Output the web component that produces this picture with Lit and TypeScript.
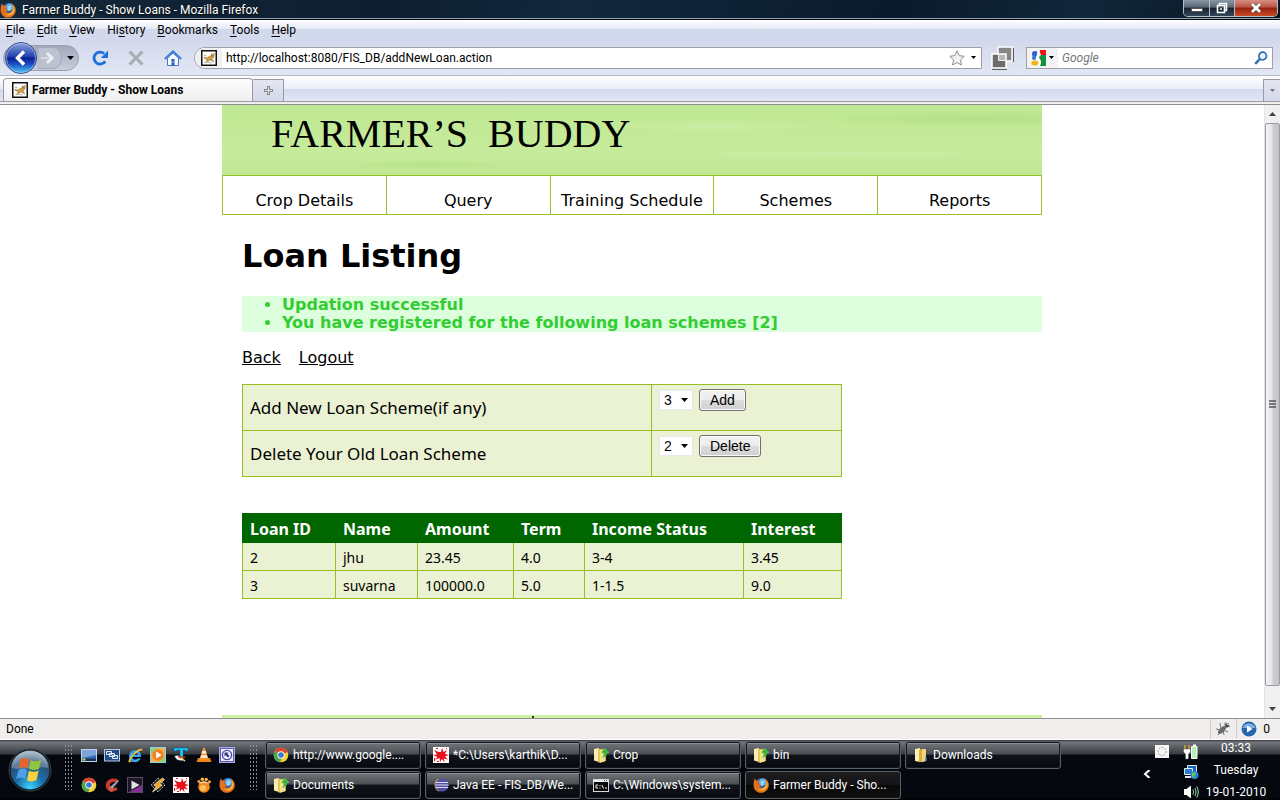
import { LitElement, html, svg, css, TemplateResult } from "lit";
import { customElement, property, state } from "lit/decorators.js";
import { classMap } from "lit/directives/class-map.js";

/* ---------- icons ---------- */

const firefox = svg`
  <circle cx="8.5" cy="7.5" r="6.4" fill="#1d5fb5"/>
  <circle cx="9.5" cy="5.2" r="3.6" fill="#58b4ee"/>
  <path d="M8 4.5c1.4-1 3-.8 4 .2l-1.6.9c.6 1 .4 2-.4 2.6L7.6 9z" fill="#cfe9f9" opacity=".7"/>
  <path d="M2 1.2c.2 1 .8 1.9 1.7 2.5 1.4-.6 2.6-.3 3.6.5L5.9 5.6c-.9.2-.8 1-.3 1.5.7.6 1.9.2 2.8.8-.3 1-1.4 1.2-2.3 1.5.9 1.5 3 1.8 4.6.8 2.300-1.400 2.800-4 2-6.100-.5-1.400-1.400-2.400-2.400-3.100 3.300.9 5.600 3.900 5.500 7.300-.1 4.200-3.500 7.500-7.700 7.500C3.700 15.800.4 12.300.5 8 .6 5.400 1 3.200 2 1.200z" fill="#e2701c"/>
  <path d="M13.300 3.200c1.700 2.500 1.500 6-.4 8.200-2.200 2.500-6 2.700-8.300.7 3 .9 5.900 0 7.500-2.300 1.300-1.900 1.700-4.300 1.200-6.600z" fill="#fbc33a"/>`;

const cat = svg`
  <rect x=".75" y=".75" width="14.500" height="14.500" fill="#fff" stroke="#111" stroke-width="1.500"/>
  <path d="M13.300 3l-.2 4-2 2 1.800 3-1-.2-2-1.600-2 .3-3 1.500 1.300-2.200L3 8.200 3.200 7l2.600 1 2.400-1.800 2-.2.3-2.500 1.300 1z" fill="#d09a48" stroke="#8a6224" stroke-width=".4"/>
  <path d="M3 5l2.500 1M3.500 12.800l4-.8 3 1.300" stroke="#9b9b8a" stroke-width=".9" fill="none"/>
  <circle cx="11" cy="5.700" r=".5" fill="#222"/>`;

const chrome = svg`
  <circle cx="8" cy="8" r="7.300" fill="#f5cf38"/>
  <path d="M8 8L1.700 4.300A7.300 7.300 0 0 1 14.600 5z" fill="#dd4132"/>
  <path d="M1.700 4.300A7.300 7.300 0 0 0 7 15.200L10 9z" fill="#4aa64e"/>
  <circle cx="8" cy="8" r="3.700" fill="#fff"/><circle cx="8" cy="8" r="2.800" fill="#3d78c9"/>`;

const folderUp = svg`
  <path d="M1 2l5-1v14l-5-1.500z" fill="#fbeeb0"/>
  <path d="M5 2h7.500v12L8 15.500H5z" fill="#e8c45a"/>
  <path d="M7 3.500l5.500-1v11.500L8 15.500H7z" fill="#f8e08d"/>
  <path d="M11.500 1L16 5.500h-2.200c0 3-1.600 4.800-4.800 5.500 1.400-1.300 1.800-3 1.700-5H8z" fill="#38b52f" stroke="#7be26d" stroke-width=".5"/>`;

const folder = svg`
  <path d="M2 2l5-1v14l-5-1z" fill="#fbf0b8"/>
  <path d="M6 3l3-1v13l-3 .3z" fill="#d9ad40"/>
  <path d="M9 2h4v12l-4 1.300z" fill="#f1d474"/>
  <path d="M12 10h1.500v4H12z" fill="#5aa0dc"/>`;

const splat = svg`
  <rect width="16" height="16" fill="#fff"/>
  <path d="M8 5l1-4 1.500 4L14 3l-2 4 4 1-4 1.500 3 3-4-1 .5 4L9 12l-2 3-.5-4L2 13l2.500-3L0 8l4-.5L1 3l4.500 2z" fill="#e8101c"/>
  <path d="M3 1h2v1H3zM1 11h1v3H1zM13 1h1v1h-1zM4 14h2v1H4z" fill="#e8101c"/>`;

const eclipse = svg`
  <path d="M6 1.500A7 7 0 0 0 6 14.500z" fill="#e7a35a"/>
  <circle cx="9" cy="8" r="6.600" fill="#5450a6"/>
  <path d="M3 5.500h12M2.500 8h13M3 10.500h12" stroke="#dcdcf5" stroke-width="1"/>`;

const terminal = svg`
  <rect x=".5" y="2.500" width="15" height="12" fill="#080808" stroke="#d8d8d8"/>
  <path d="M1 3h14v2H1z" fill="#e8eef5"/><path d="M11 3.500h1M13 3.500h1" stroke="#446"/>
  <path d="M5 8H3v3h2M7 8v1M7 10.500v1M9 8l1.500 3.500M12 11h2" stroke="#fff" fill="none"/>`;

const desktop = svg`
  <rect x=".5" y="2.500" width="15" height="12" fill="#3b6cb7" stroke="#c3d2e8"/>
  <path d="M1 3h14v5L1 11z" fill="#7ea6dc"/><path d="M1 11.500h14V14H1z" fill="#1d2f52"/>
  <circle cx="3" cy="12.500" r="1.800" fill="#53b06b"/><path d="M2 12.500h2" stroke="#f3bd3a"/>`;

const switcher = svg`
  <rect x=".5" y="2.500" width="15" height="11.500" fill="#234b86" stroke="#b9c9df"/>
  <path d="M2.500 4.500h5v3h-5zM5.500 6.500h5v3h-5zM8.500 8.500h5v3h-5z" fill="#32649f" stroke="#e6eef8"/>`;

const ie = svg`
  <path d="M14 9.900H5.200c.2 1.700 1.400 2.600 3 2.600 1.100 0 1.900-.4 2.400-1.200h3c-.8 2.400-2.800 3.900-5.500 3.900-3.600 0-6-2.400-6-5.900S4.600 3.200 8.200 3.200c3.700 0 6 2.600 5.800 6.700zM10.900 7.700c-.2-1.500-1.200-2.300-2.700-2.300s-2.600.8-3 2.300z" fill="#39a5ea"/>
  <path d="M15.500 3.500c.3-2.500-3-2.500-6 .2C4.500 7.500 1 13 1.500 14.800c.3 1 2.300.6 4-.6-1.300.3-2.300.3-2-1 .5-2 3-5 6-7.200 3-2.300 5.200-3.200 6-2.500z" fill="#f3c23c"/>`;

const wmp = svg`
  <rect x=".5" y=".5" width="15" height="15" fill="#f7b04b" stroke="#7fd8ef"/>
  <path d="M1 1h6L1 7zM15 15H9l6-6z" fill="#8fd16b"/>
  <circle cx="8" cy="8" r="5.700" fill="#f08322"/><path d="M6.200 4.500L11.700 8l-5.500 3.500z" fill="#fff"/>`;

const textpad = svg`
  <path d="M1 1h14v3h-2L12 3h-2v10l2 1H6l1-1V3H4L3 4H1z" fill="#18d4f4" stroke="#0646a8" stroke-width=".5"/>
  <path d="M1 9l4-1 5 3-1 3-5-1z" fill="#fff" stroke="#111" stroke-width=".7"/>
  <path d="M5 9l3 2 4-1" stroke="#e22a1a" stroke-width="1.500" fill="none"/><path d="M8 11l4 3" stroke="#ffe14a" stroke-width="1.500"/>`;

const vlc = svg`
  <path d="M2 11h12l1.500 4H.5z" fill="#f08218"/><path d="M7 1h2l3.200 11c-2 1.300-6.400 1.300-8.400 0z" fill="#f59427"/>
  <path d="M6.200 4h3.600l.7 2.500h-5zM5 8.300h6l.7 2.400H4.300z" fill="#f5efe8"/>`;

const backup = svg`
  <rect x=".5" y=".5" width="15" height="15" fill="#5a5cb8" stroke="#a9aae6"/>
  <rect x="2" y="2" width="12" height="12" fill="#eeeefb"/>
  <path d="M5.500 5.500h4L8.300 6.700l2.200 2.200-1.600 1.600-2.200-2.200-1.200 1.200z" fill="#35378e"/>
  <circle cx="8" cy="8" r="4.600" stroke="#4a4ca4" stroke-width="1.400" fill="none"/>`;

const ccleaner = svg`
  <path d="M14 2.500C9 0 1.800 2.500 1.800 8.500S9 15.800 13.500 13l-1-3c-3 1.700-6.500.8-6.500-2S9.500 4.300 13 5.500z" fill="#c93a2a"/>
  <path d="M7 9l7-6 1 1-5.500 6.500L8 14l-3-2z" fill="#98a0ab"/><path d="M5 10l5 2-2 3-3-1z" fill="#d9574a"/>`;

const player = svg`
  <rect x=".5" y=".5" width="15" height="15" fill="#1d1724" stroke="#5b4a66"/>
  <path d="M2 15L15 8v7z" fill="#a63bb8" opacity=".75"/><path d="M4.500 3.500L12.500 8l-8 4.500z" fill="#e2e2e6"/>`;

const winamp = svg`
  <path d="M8 1l7 7-7 7-7-7z" fill="#2b2b2b" stroke="#e8e8e8" stroke-width=".8" stroke-dasharray="1.500 1"/>
  <path d="M12.500 1L4 8l2.500 1.200L2.500 15 12 8.200 9.500 7l5-4.500z" fill="#f6a21e" stroke="#fff0c0" stroke-width=".7"/>`;

const gom = svg`
  <circle cx="8" cy="10" r="5.800" fill="#f58a1c"/><circle cx="7" cy="11" r="3" fill="#fdc067"/>
  <circle cx="3" cy="4.500" r="1.600" fill="#ffa42e"/><circle cx="6.300" cy="2.200" r="1.700" fill="#ffb44a"/>
  <circle cx="10.200" cy="2.400" r="1.700" fill="#ffb44a"/><circle cx="13.400" cy="4.800" r="1.600" fill="#ffa42e"/>
  <path d="M3.500 6.500c3-2 6-2 9 0" stroke="#fff" stroke-width="1" fill="none"/>`;

const icon = (body: TemplateResult | unknown, size = 16, box = 16) =>
  html`<svg width=${size} height=${size} viewBox="0 0 ${box} ${box}" aria-hidden="true">${body}</svg>`;

const caret = html`<svg width="7" height="4" viewBox="0 0 7 4" aria-hidden="true"><path d="M0 0h7L3.500 4z" fill="currentColor"/></svg>`;
const smallCaret = html`<svg width="5" height="3" viewBox="0 0 5 3" aria-hidden="true"><path d="M0 0h5L2.500 3z" fill="currentColor"/></svg>`;

/* ---------- shared rules ---------- */

const base = css`
  *, *::before, *::after { box-sizing: border-box; }
  :host { font-family: Roboto, "Open Sans", sans-serif; font-size: 12px; line-height: 16px; color: #000; }
  button { font: inherit; color: inherit; background: none; border: 0; padding: 0; margin: 0; }
  svg { display: block; flex: none; }
`;

/* ---------- browser chrome ---------- */

@customElement("browser-chrome")
class BrowserChrome extends LitElement {
  @property() pageTitle = "";
  @property() url = "";

  static styles = [base, css`
    :host { display: block; }
    .title { display: flex; align-items: center; height: 20px; gap: 6px; color: #fff;
      background: linear-gradient(100deg, #14293a, #0d1e30 30%, #12283c 45%, #0a1a2c 70%, #11273a 85%, #081522);
      border-bottom: 1px solid #050a10; box-shadow: inset 0 -1px #8fa0af; }
    .title h1 { flex: 1; margin: 0; font-size: inherit; font-weight: 400; text-shadow: 0 1px 2px #000; }
    .win { display: flex; align-self: flex-start; margin-right: 2px; border: 1px solid #b5bfc8; border-top: 0; border-radius: 0 0 5px 5px; overflow: hidden; }
    .win button { width: 25px; height: 16px; display: grid; place-items: center; background: linear-gradient(#8a97a4, #5a6876 45%, #16222f 50%, #33475b); border-right: 1px solid #b5bfc8; }
    .win .min { place-items: end center; padding-bottom: 4px; width: 26px; }
    .win .close { width: 42px; border: 0; background: linear-gradient(#d49083, #bd5142 45%, #96200f 50%, #cc4a26); }
    .menu { display: flex; height: 20px; padding-left: 6px; gap: 12px; align-items: center;
      background: linear-gradient(#fff, #e4e9f4 45%, #d3d9ec 46%, #d3d9ec); }
    .menu u { text-underline-offset: 2px; }
    .nav { display: flex; align-items: center; height: 36px; padding: 0 7px 0 3px; background: linear-gradient(#d3d9ec, #e2e7f5); border-bottom: 1px solid #b6bac8; }
    .history { display: flex; align-items: center; height: 26px; width: 76px; border-radius: 13px; background: linear-gradient(#a3a9ba, #c9cedd); border: 1px solid #9aa0b2; }
    .caret { width: 16px; display: grid; place-items: center; height: 20px; }
    .tools { display: flex; gap: 20px; margin: 0 12px 0 13px; align-items: center; }
    .address { flex: 1; display: flex; align-items: center; height: 22px; background: #fff; border: 1px solid #a0a0a4; border-radius: 11px 0 0 11px; min-width: 0; }
    .site { width: 27px; height: 20px; display: grid; place-items: center; background: #f0f0f2; border-radius: 10px 0 0 10px; }
    input { flex: 1; min-width: 0; border: 0; outline: 0; background: none; font: inherit; padding: 0 4px; height: 18px; color: #000; }
    .plug { margin: 0 12px 0 8px; }
    .search { display: flex; align-items: center; width: 247px; height: 22px; background: #fff; border: 1px solid #a0a0a4; padding-right: 4px; }
    .engine { display: flex; align-items: center; gap: 3px; width: 31px; height: 20px; padding-left: 3px; background: #f3f3f5; }
    .search input { font-style: italic; }
    .search input::placeholder { color: #777; opacity: 1; }
    .tabs { display: flex; align-items: flex-end; height: 26px; padding-left: 3px; border-bottom: 1px solid #9a9a9e;
      background: linear-gradient(#fff, #eceff8 50%, #d4daee 52%, #e2e7f6); }
    .tab { display: flex; align-items: center; gap: 4px; height: 23px; width: 250px; padding: 0 8px; border: 1px solid #9a9a9e; border-bottom: 0; border-radius: 4px 4px 0 0;
      background: linear-gradient(#fdfdfd, #efefef); font-weight: 700; text-align: left; }
    .new, .list { display: grid; place-items: center; width: 31px; height: 22px; border: 1px solid #9a9aa4; border-bottom: 0; border-left: 0; background: linear-gradient(#e4e7f1, #d3d8e8); }
    .list { width: 17px; margin-left: auto; border-left: 1px solid #9a9aa4; border-right: 0; color: #777; }
    .rim { height: 3px; background: #f0f0f0; border-bottom: 1px solid #8f8f93; }
  `];

  render() {
    const menus = [["", "F", "ile"], ["", "E", "dit"], ["", "V", "iew"], ["Hi", "s", "tory"], ["", "B", "ookmarks"], ["", "T", "ools"], ["", "H", "elp"]];
    return html`
      <header class="title">
        ${icon(firefox)}
        <h1>${this.pageTitle} - Mozilla Firefox</h1>
        <div class="win">
          <button class="min" aria-label="Minimize"><svg width="12" height="4" viewBox="0 0 12 4"><rect x=".5" y=".5" width="11" height="3" fill="#fff" stroke="#555"/></svg></button>
          <button aria-label="Restore"><svg width="12" height="12" viewBox="0 0 12 12"><path d="M3.500 3V1.500h7v7H9M1.500 3.500h7v7h-7z" fill="none" stroke="#fff" stroke-width="1.600"/><path d="M4.500 6.500h1v1h-1z" stroke="#fff" fill="#222"/></svg></button>
          <button class="close" aria-label="Close"><svg width="12" height="10" viewBox="0 0 12 10"><path d="M2 1l8 8M10 1L2 9" stroke="#554" stroke-width="4"/><path d="M2 1l8 8M10 1L2 9" stroke="#fff" stroke-width="2.500"/></svg></button>
        </div>
      </header>
      <nav class="menu" aria-label="Menu bar">${menus.map(([a, b, c]) => html`<button>${a}<u>${b}</u>${c}</button>`)}</nav>
      <div class="nav">
        <div class="history">
          <button aria-label="Back"><svg width="34" height="34" viewBox="0 0 34 34">
            <defs><linearGradient id="bk" x2="0" y2="1"><stop offset="0" stop-color="#8ea4e0"/><stop offset=".45" stop-color="#2343ae"/><stop offset=".5" stop-color="#0c1f94"/><stop offset=".7" stop-color="#1a4fc4"/><stop offset="1" stop-color="#4fd0fa"/></linearGradient></defs>
            <circle cx="17" cy="17" r="15.500" fill="url(#bk)" stroke="#3a4c8c"/><circle cx="17" cy="17" r="14.500" fill="none" stroke="#b9cdf2" stroke-opacity=".6"/>
            <path d="M20 10.500L13.500 17l6.500 6.500" fill="none" stroke="#fff" stroke-width="3.400"/></svg></button>
          <button aria-label="Forward"><svg width="24" height="22" viewBox="0 0 24 22"><path d="M0 .5h15a8 10 0 0 1 0 21H0z" fill="#bcc2d0" stroke="#a4aaba"/><path d="M9 6l5 5-5 5" fill="none" stroke="#eceef4" stroke-width="3"/><path d="M3 11h9" stroke="#d5d9e4" stroke-width="2"/></svg></button>
          <button class="caret" aria-label="Recent pages">${caret}</button>
        </div>
        <div class="tools">
          <button aria-label="Reload">${icon(svg`<path d="M13.200 11.200A6 6 0 1 1 12 3.600" fill="none" stroke="#1b6fdf" stroke-width="2.800"/><path d="M16 .5V8H8.800z" fill="#1b6fdf"/>`)}</button>
          <button aria-label="Stop">${icon(svg`<path d="M1.500 1.500l13 13M14.500 1.500l-13 13" stroke="#a9abb3" stroke-width="3"/>`)}</button>
          <button aria-label="Home"><svg width="18" height="16" viewBox="0 0 18 16"><path d="M3.500 8v7.500h11V8L9 3z" fill="#f4f8ff" stroke="#4779c8"/><path d="M.8 9L9 1.300 17.200 9" fill="none" stroke="#3d7fd8" stroke-width="2"/><path d="M7.500 9h3v6.500h-3z" fill="#2a5cb0"/><path d="M8.500 11h1v2h-1z" fill="#bcd"/></svg></button>
        </div>
        <div class="address">
          <span class="site">${icon(cat)}</span>
          <input aria-label="Location" .value=${this.url} />
          <button aria-label="Bookmark this page">${icon(svg`<path d="M8 .9l2.200 4.700 5 .7-3.700 3.500.9 5.200L8 12.500 3.600 15l.9-5.200L.8 6.300l5-.7z" fill="#f2f2f2" stroke="#8d8d8d"/>`)}</button>
          <button class="caret" aria-label="Show history">${smallCaret}</button>
        </div>
        <button class="plug" aria-label="Windows"><svg width="24" height="24" viewBox="0 0 24 24"><path d="M2 23.200h15M23.200 2v14" stroke="#222"/><path d="M8 1h14v14H8z" fill="#858585" stroke="#fff" stroke-width="1.500"/><path d="M2 8h14v14H2z" fill="#6c6c6c" stroke="#fff" stroke-width="1.500"/><path d="M8.500 8.500h7v6h-7z" fill="#b7b7b7" stroke="#eee"/></svg></button>
        <div class="search">
          <button class="engine" aria-label="Search engine">${icon(svg`<path d="M9 0h7v5h-5z" fill="#f01414"/><path d="M11 5h5v11h-6l1-5-2-4z" fill="#14913c"/><circle cx="5" cy="4" r="3" fill="#2a62d0"/><circle cx="4" cy="8" r="2" fill="#3a72d8"/><ellipse cx="5" cy="13" rx="3.700" ry="2.500" fill="#f5b416"/><path d="M9 0L7 8l3 4-1 4" stroke="#fff" stroke-width="2" fill="none"/>`)}${smallCaret}</button>
          <input aria-label="Search" placeholder="Google" />
          <button aria-label="Go"><svg width="14" height="14" viewBox="0 0 14 14"><circle cx="8.700" cy="5" r="3.800" fill="#eaf3fc" stroke="#2f6cb0" stroke-width="1.700"/><path d="M6 7.800L1.200 12.800" stroke="#2f6cb0" stroke-width="2.400"/></svg></button>
        </div>
      </div>
      <div class="tabs">
        <button class="tab">${icon(cat)}<span>${this.pageTitle}</span></button>
        <button class="new" aria-label="New tab"><svg width="9" height="9" viewBox="0 0 9 9"><path d="M4.500 0v9M0 4.500h9" stroke="#8a8a90" stroke-width="3"/><path d="M4.500 1v7M1 4.500h7" stroke="#ddd"/></svg></button>
        <button class="list" aria-label="List all tabs">${smallCaret}</button>
      </div>
      <div class="rim"></div>`;
  }
}

/* ---------- page ---------- */

interface Loan { id: string; name: string; amount: string; term: string; status: string; interest: string; }

@customElement("loan-page")
class LoanPage extends LitElement {
  @state() private loans: Loan[] = [
    { id: "2", name: "jhu", amount: "23.45", term: "4.0", status: "3-4", interest: "3.45" },
    { id: "3", name: "suvarna", amount: "100000.0", term: "5.0", status: "1-1.5", interest: "9.0" },
  ];

  static styles = [base, css`
    :host { display: flex; flex-direction: column; align-items: center; overflow: hidden; background: #fff; font-family: "DejaVu Sans", Verdana, sans-serif; font-size: 16px; line-height: 18px; }
    .wrap { width: 820px; max-width: 100%; flex: 1; display: flex; flex-direction: column; min-height: 0; }
    .banner { height: 70px; padding: 6px 49px; font-family: "Liberation Serif", serif; font-size: 40px; line-height: 46px; color: #000; white-space: pre;
      background: radial-gradient(ellipse 90px 5px at 25% 85%, #b3e083aa, #0000), radial-gradient(ellipse 160px 8px at 92% 20%, #b0dd80bb, #0000), radial-gradient(ellipse 120px 6px at 60% 30%, #d0efabaa, #0000), radial-gradient(ellipse 180px 5px at 75% 70%, #cfeeaaaa, #0000),
        linear-gradient(#bfe792, #c4ea98 40%, #c6eb9c 70%, #c0e793); }
    .nav { display: grid; grid-template-columns: repeat(5, 1fr); border: 1px solid #9abf28; border-right: 0; }
    .nav a { height: 38px; padding-top: 16px; text-align: center; color: #000; text-decoration: none; white-space: nowrap; border-right: 1px solid #9abf28; }
    main { padding-left: 20px; flex: 1; }
    h2 { margin: 22px 0 20px; font-size: 32px; line-height: 39px; }
    .msgs { margin: 0; padding-left: 40px; background: #dfd; color: #32cd32; font-weight: 700; }
    .links { display: flex; gap: 18px; margin: 17px 0; }
    .links a { color: #000; }
    table { width: 600px; max-width: 100%; border-collapse: collapse; background: #eaf2d3; font-family: "Noto Sans", "Open Sans", sans-serif; }
    td, th { border: 1px solid #98bf21; text-align: left; padding: 0 7px; }
    .schemes { margin-bottom: 36px; font-size: 17px; }
    .schemes th { font-weight: 400; height: 46px; width: 409px; }
    .schemes td { vertical-align: top; padding-top: 4px; }
    .pick { display: flex; gap: 6px; align-items: center; font: 14px/16px "Liberation Sans", Arial, sans-serif; }
    .drop { display: grid; align-items: center; }
    .drop > * { grid-area: 1 / 1; }
    .drop svg { justify-self: end; margin-right: 5px; pointer-events: none; }
    select { appearance: none; font: inherit; width: 34px; height: 20px; padding: 0 4px; border: 1px solid #e3e9ef; border-radius: 0; background: #fff; color: #000; }
    .pick button { height: 22px; padding: 0 10px; border: 1px solid #707070; border-radius: 3px; box-shadow: inset 0 0 0 1px #fbfbfb; background: linear-gradient(#f2f2f2, #ebebeb 50%, #dddddd 50%, #cfcfcf); }
    .loans { font-size: 14px; table-layout: fixed; }
    .loans th { height: 29px; padding-top: 2px; background: #060; color: #fff; border: 1px solid #060; font-size: 16px; }
    .loans td { height: 28px; padding-top: 2px; }
    .foot { height: 3px; background: #cbf3a2; display: flex; padding-left: 310px; align-items: center; }
    .foot::before { content: ""; width: 2px; height: 2px; background: #333; }
  `];

  private picker(id: string, value: string, action: string) {
    return html`<div class="pick">
      <span class="drop"><select id=${id}><option>${value}</option></select>
        <svg width="7" height="4" viewBox="0 0 7 4" aria-hidden="true"><path d="M0 0h7L3.500 4z"/></svg></span>
      <button>${action}</button></div>`;
  }

  render() {
    return html`<div class="wrap">
      <div class="banner">FARMER’S  BUDDY</div>
      <nav class="nav" aria-label="Site">
        ${["Crop Details", "Query", "Training Schedule", "Schemes", "Reports"].map((t) => html`<a href="#">${t}</a>`)}
      </nav>
      <main>
        <h2>Loan Listing</h2>
        <ul class="msgs"><li>Updation successful</li><li>You have registered for the following loan schemes [2]</li></ul>
        <div class="links"><a href="#">Back</a><a href="#">Logout</a></div>
        <table class="schemes">
          <tr><th scope="row"><label for="add">Add New Loan Scheme(if any)</label></th><td>${this.picker("add", "3", "Add")}</td></tr>
          <tr><th scope="row"><label for="del">Delete Your Old Loan Scheme</label></th><td>${this.picker("del", "2", "Delete")}</td></tr>
        </table>
        <table class="loans">
          <colgroup><col width="93" /><col width="82" /><col width="96" /><col width="71" /><col width="159" /><col width="98" /></colgroup>
          <thead><tr>${["Loan ID", "Name", "Amount", "Term", "Income Status", "Interest"].map((h) => html`<th scope="col">${h}</th>`)}</tr></thead>
          <tbody>${this.loans.map((l) => html`<tr><td>${l.id}</td><td>${l.name}</td><td>${l.amount}</td><td>${l.term}</td><td>${l.status}</td><td>${l.interest}</td></tr>`)}</tbody>
        </table>
      </main>
      <footer class="foot"></footer>
    </div>`;
  }
}

@customElement("scroll-rail")
class ScrollRail extends LitElement {
  static styles = [base, css`
    :host { display: flex; flex-direction: column; width: 16px; background: #f0f0f1; border-left: 1px solid #e4e4e6; }
    button { height: 18px; display: grid; place-items: center; color: #444; }
    .thumb { flex: 1; display: grid; place-items: center; margin-bottom: 14px; border: 1px solid #9b9ba0; border-radius: 2px; background: linear-gradient(90deg, #f5f5f6, #e4e4e7 45%, #cdcdd2 55%, #c2c2c8); }
    .flip { transform: rotate(180deg); }
  `];
  render() {
    return html`
      <button class="flip" aria-label="Scroll up">${caret}</button>
      <div class="thumb"><svg width="7" height="9" viewBox="0 0 7 9"><path d="M0 1h7M0 4h7M0 7h7" stroke="#555" stroke-width="1.500"/></svg></div>
      <button aria-label="Scroll down">${caret}</button>`;
  }
}

/* ---------- taskbar ---------- */

@customElement("task-bar")
class TaskBar extends LitElement {
  static styles = [base, css`
    :host { display: flex; height: 60px; color: #fff; overflow: hidden;
      background: linear-gradient(#30343a, #74787c 2px, #54585c 8px, #363a3e 14px, #05090f 15px, #04080e 58px, #000); }
    .start { width: 64px; display: grid; place-items: center; padding-right: 4px; }
    .grip { width: 8px; margin: 4px 0 10px; background: radial-gradient(circle, #8b9097 1px, #0000 1px) 0 0 / 3px 4px; }
    .quick { display: grid; grid-template-columns: repeat(7, 16px); grid-template-rows: 16px 16px; gap: 14px 7px; padding: 7px 14px 0 9px; }
    .tasks { flex: 1; display: grid; grid-auto-flow: column; grid-template-rows: 28px 28px; grid-template-columns: repeat(5, minmax(0, 156px)); gap: 2px 4px; margin-left: 8px; padding-top: 1px; }
    .task { display: flex; align-items: center; gap: 4px; padding: 0 4px 0 7px; text-align: left; border: 1px solid #5b6066; border-radius: 3px; box-shadow: inset 0 0 0 1px #14181d, inset 0 2px #8d9196;
      background: linear-gradient(#74787d, #4b4f54 12px, #12161c 13px, #05090f); }
    .task span { white-space: nowrap; overflow: hidden; text-overflow: ellipsis; }
    .active { background: linear-gradient(#1c1c1e, #151517 50%, #080809 51%, #111); box-shadow: none; }
    .tray { display: flex; align-items: flex-start; }
    .col { display: grid; justify-items: end; gap: 4px; padding: 4px 2px 0 0; }
    .hidden { display: grid; gap: 10px; padding: 4px 13px 0 0; justify-items: end; }
    .hidden button { margin-right: 20px; }
    .clock { display: grid; justify-items: center; width: 79px; grid-auto-rows: 22px; padding-right: 9px; }
  `];

  private tasks: [unknown, string][] = [
    [chrome, "http://www.google...."], [folderUp, "Documents"],
    [splat, "*C:\\Users\\karthik\\D..."], [eclipse, "Java EE - FIS_DB/We..."],
    [folderUp, "Crop"], [terminal, "C:\\Windows\\system..."],
    [folderUp, "bin"], [firefox, "Farmer Buddy - Sho..."],
    [folder, "Downloads"],
  ];

  render() {
    const quick = [desktop, switcher, ie, wmp, textpad, vlc, backup, chrome, ccleaner, player, winamp, splat, gom, firefox];
    return html`
      <button class="start" aria-label="Start"><svg width="44" height="44" viewBox="0 0 44 44">
        <defs><radialGradient id="orb" cx=".5" cy=".95" r=".9"><stop offset="0" stop-color="#3cd4ff"/><stop offset=".4" stop-color="#1b6ea8"/><stop offset=".75" stop-color="#2b4f74"/><stop offset="1" stop-color="#8da5b8"/></radialGradient></defs>
        <circle cx="22" cy="22" r="21" fill="#0c1218" stroke="#39424c"/><circle cx="22" cy="22" r="19.500" fill="url(#orb)"/>
        <path d="M4 20A18 17 0 0 1 40 20C30 17 14 23 4 20z" fill="#fff" opacity=".25"/>
        <path d="M12.500 11.500c3-1.800 5.500-1.800 8.500 0l-1.500 9c-3-1.700-5.800-1.700-8.700 0z" fill="#e8622a"/>
        <path d="M22.500 12.300c3.500 1.500 7 1.300 11-.5l-2.500 9c-3 1.700-6.800 1.700-10 .2z" fill="#8fc63d"/>
        <path d="M10.500 22c3-1.700 5.800-1.700 8.700 0l-1.700 9c-2.800-1.700-6.300-1.700-9.500 0z" fill="#4e9fe6"/>
        <path d="M20.700 22.700c3.200 1.600 7 1.500 10-.2L28.500 32c-3 1.800-6.500 1.800-9.500.2z" fill="#fbd13d"/></svg></button>
      <div class="grip"></div>
      <div class="quick">${quick.map((q) => icon(q))}</div>
      <div class="grip"></div>
      <div class="tasks">${this.tasks.map(([i, t]) => html`<button class=${classMap({ task: true, active: i === firefox })}>${icon(i)}<span>${t}</span></button>`)}</div>
      <div class="tray">
        <div class="hidden">
          ${icon(svg`<rect x="1" y="1" width="14" height="13" fill="#f4f4f4"/><circle cx="8" cy="7.500" r="4" fill="none" stroke="#888" stroke-dasharray="1.500 1.500"/>`)}
          <button aria-label="Hide icons"><svg width="7" height="8" viewBox="0 0 7 8"><path d="M6.500 0L2 4l4.500 4" stroke="#fff" stroke-width="2" fill="none"/></svg></button>
        </div>
        <div class="col">
          ${icon(svg`<path d="M8.500 2.500h5.500v12H8.500z" fill="#b5f0b8" stroke="#fff"/><path d="M10 .5h3v2h-3z" fill="#fff"/><path d="M2 1v4M6 1v4" stroke="#d3a92e" stroke-width="1.500"/><path d="M.5 5h7v3L5.500 10V15h-3v-5L.5 8z" fill="#fff" stroke="#555" stroke-width=".5"/>`)}
          ${icon(svg`<path d="M4.500 1.500h9v8h-9z" fill="#1c62b8" stroke="#dfeaf5"/><path d="M1.500 4.500h8v6h-8z" fill="#2b7cd0" stroke="#dfeaf5"/><path d="M2 13h6" stroke="#dfe6ee" stroke-width="2"/><circle cx="11.500" cy="11" r="4" fill="#2a7fe0"/><path d="M9 9l3-1 1 2-2 2 1 2.500-3-2z" fill="#5fd04a"/>`)}
          ${icon(svg`<path d="M1 5h2.500L8 1.500v13L3.500 11H1z" fill="#fff"/><path d="M9.800 5.500c1 1.500 1 3.500 0 5M11.800 4c1.600 2.500 1.600 5.500 0 8M13.800 2.500c2 3.500 2 7.500 0 11" fill="none" stroke="#9fe0b0"/>`)}
        </div>
        <div class="clock"><span>03:33</span><span>Tuesday</span><span>19-01-2010</span></div>
      </div>`;
  }
}

/* ---------- window ---------- */

@customElement("app-root")
class AppRoot extends LitElement {
  static styles = [base, css`
    :host { display: flex; flex-direction: column; height: 100vh; overflow: hidden; background: #fff; }
    .view { flex: 1; display: flex; min-height: 0; }
    loan-page { flex: 1; min-width: 0; }
    .status { display: flex; align-items: center; height: 22px; padding: 0 5px 0 6px; background: #f0eeed; border-top: 1px solid #8f8f93; border-bottom: 1px solid #fff; }
    .status > span { flex: 1; }
    .cell { display: flex; align-items: center; gap: 6px; height: 20px; padding: 0 5px 0 4px; border-left: 1px solid #cfcccb; }
  `];

  render() {
    return html`
      <browser-chrome pageTitle="Farmer Buddy - Show Loans" url="http://localhost:8080/FIS_DB/addNewLoan.action"></browser-chrome>
      <div class="view"><loan-page></loan-page><scroll-rail></scroll-rail></div>
      <div class="status"><span>Done</span>
        <div class="cell">${icon(svg`<ellipse cx="7" cy="9" rx="2.300" ry="5" fill="#666" transform="rotate(45 7 9)"/><path d="M1 8l5 1M5 2l1 6M3 14l3-4M13 11L8 9M9 14l-1-5M10 5l4-3M11 6l4-1M9 4l2-3" stroke="#777"/><circle cx="12" cy="4.500" r="2" fill="#444"/><circle cx="13" cy="3.500" r=".8" fill="#fff"/>`)}</div>
        <div class="cell">${icon(svg`<circle cx="8" cy="8" r="7.500" fill="#2566ae"/><path d="M1.500 7A6.700 6 0 0 1 14.500 7z" fill="#7fb0e2"/><path d="M6 4.500L11.500 8 6 11.500z" fill="#fff"/>`)}<span>0</span></div>
      </div>
      <task-bar></task-bar>`;
  }
}
